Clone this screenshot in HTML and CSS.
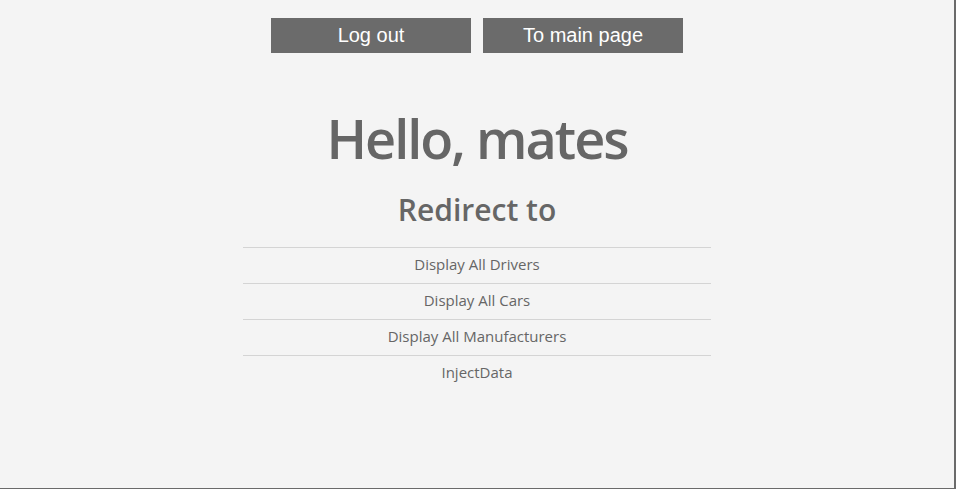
FILE: index.html
```html
<!DOCTYPE html>
<html>
<head>
<meta charset="utf-8">
<link rel="stylesheet" href="styles.css">
</head>
<body>
<div class="frame">
  <div class="actions">
    <a class="btn" href="#">Log out</a>
    <a class="btn" href="#">To main page</a>
  </div>
  <h1 class="title">Hello, mates</h1>
  <h2 class="subtitle">Redirect to</h2>
  <ul class="links">
    <li><a href="#">Display All Drivers</a></li>
    <li><a href="#">Display All Cars</a></li>
    <li><a href="#">Display All Manufacturers</a></li>
    <li><a href="#">InjectData</a></li>
  </ul>
</div>
</body>
</html>
```
FILE: styles.css
```css
html, body {
  margin: 0;
  padding: 0;
  background: #f4f4f4;
}
.frame {
  box-sizing: border-box;
  width: 956px;
  height: 489px;
  border-right: 2px solid #6a6a6a;
  border-bottom: 1px solid #6a6a6a;
  display: flex;
  flex-direction: column;
  align-items: center;
  font-family: "Open Sans", sans-serif;
  color: #666;
}
.actions {
  display: flex;
  gap: 12px;
  margin-top: 18px;
}
.btn {
  display: flex;
  align-items: center;
  justify-content: center;
  width: 200px;
  height: 35px;
  background: #6b6b6b;
  color: #fff;
  text-decoration: none;
  font-family: "Liberation Sans", Arial, sans-serif;
  font-size: 20px;
}
.title {
  margin: 47px 0 0;
  font-size: 54px;
  font-weight: 600;
  letter-spacing: -2px;
  line-height: 76px;
}
.subtitle {
  margin: 14px 0 0;
  font-size: 30px;
  font-weight: 600;
  line-height: 40px;
}
.links {
  list-style: none;
  margin: 17px 0 0;
  padding: 0;
  width: 468px;
}
.links li {
  border-top: 1px solid #d4d4d4;
  height: 36px;
  box-sizing: border-box;
  padding-bottom: 4px;
  display: flex;
  align-items: center;
  justify-content: center;
}
.links a {
  color: #666;
  text-decoration: none;
  font-size: 15px;
}
```
